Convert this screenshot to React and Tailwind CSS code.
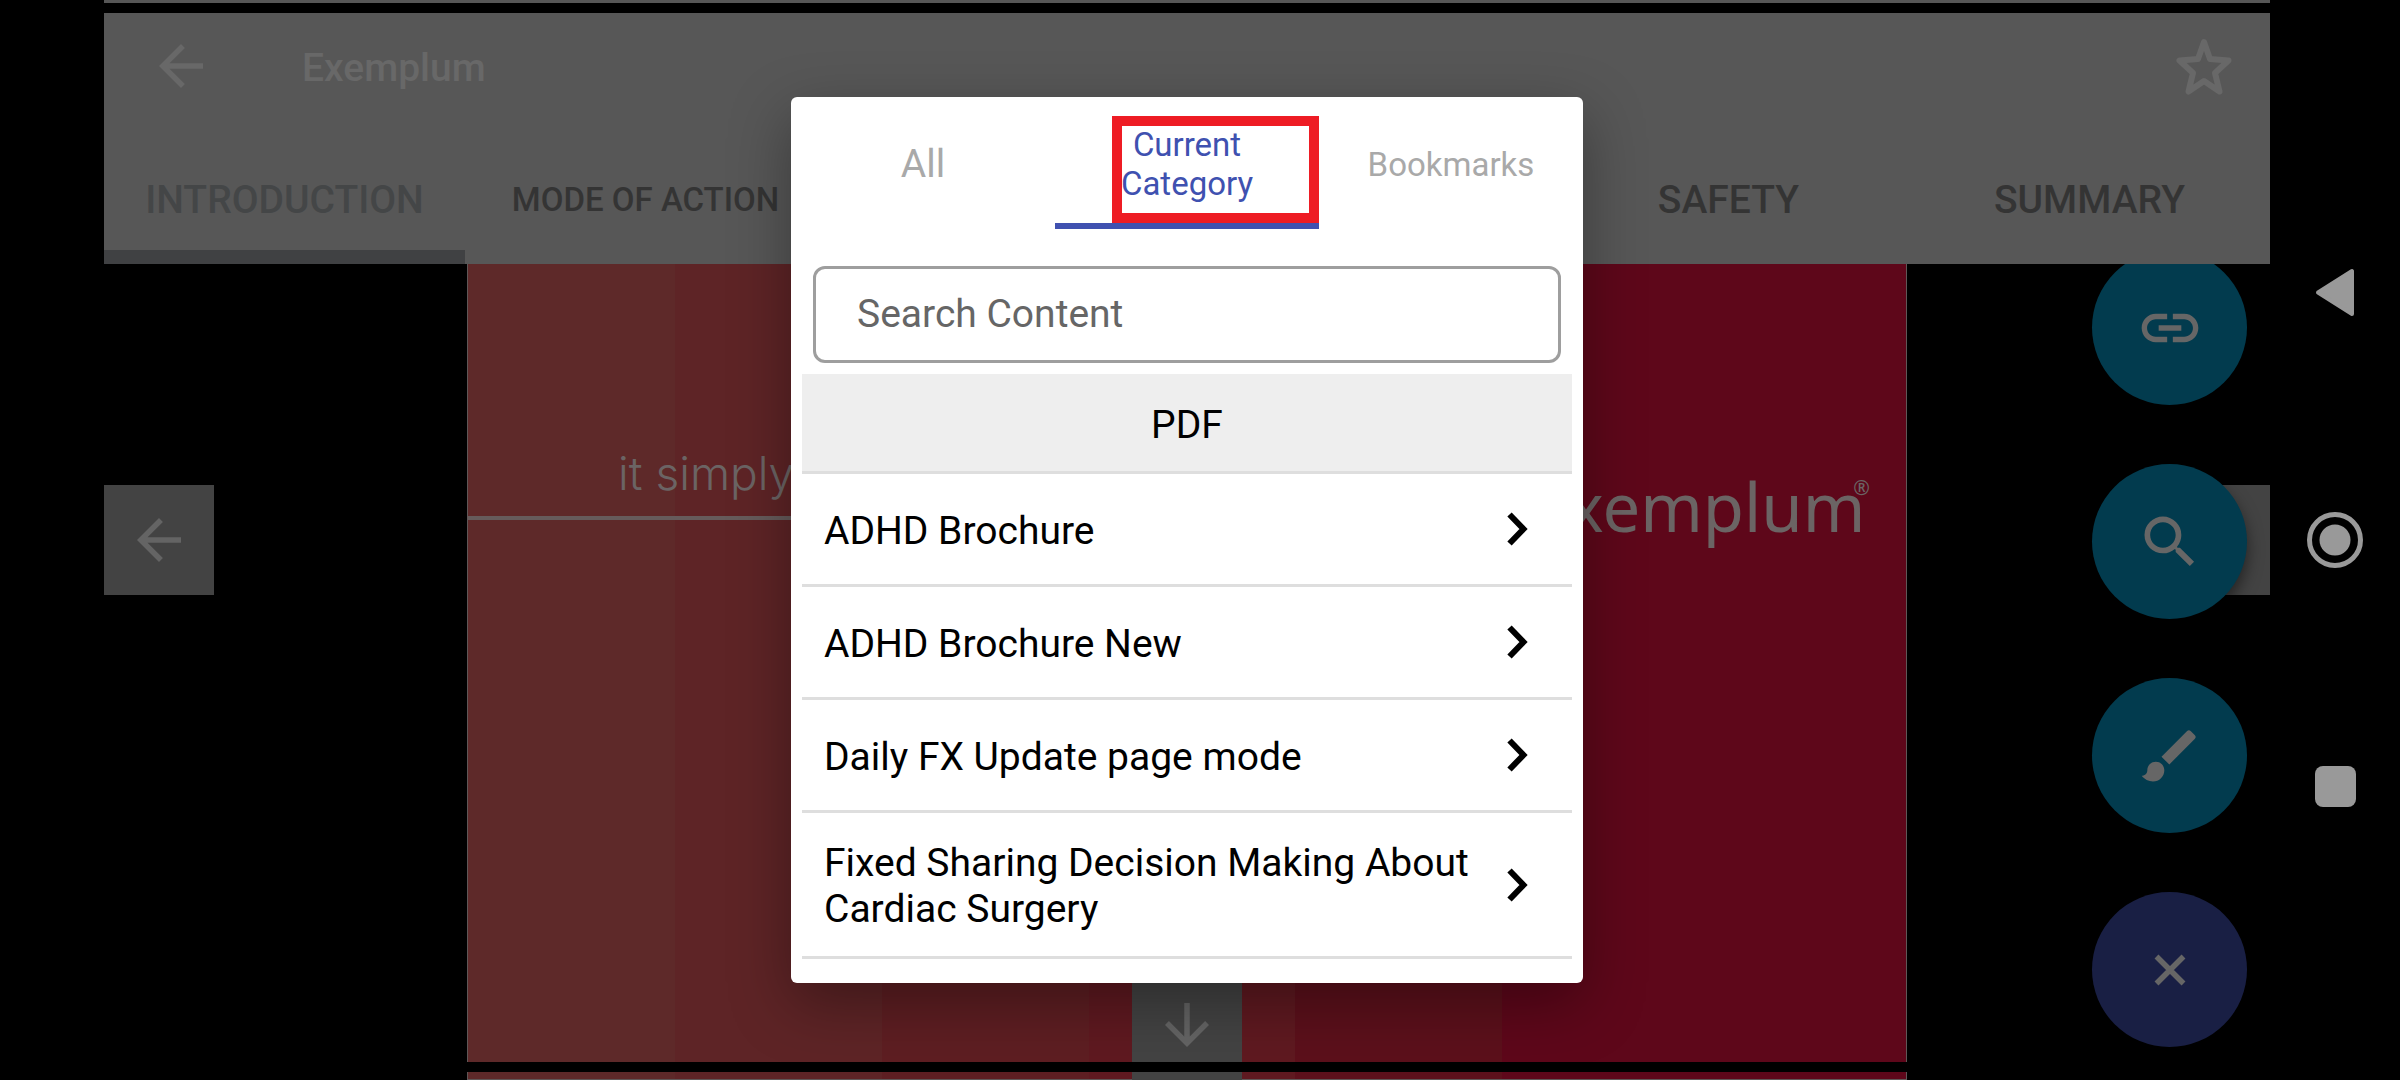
import { MdArrowBack, MdArrowDownward, MdArrowForward, MdBrush, MdLink, MdSearch } from "react-icons/md";
import clsx from "clsx";

const SECTIONS = [
  { label: "INTRODUCTION", active: true },
  { label: "MODE OF ACTION", small: true },
  { label: "" },
  { label: "" },
  { label: "SAFETY" },
  { label: "SUMMARY" },
];

const FILTERS = [
  { label: "All", className: "text-[39px] text-[#a9a9a9]" },
  { label: "Current Category", className: "text-[33px] text-[#3f51b0]", active: true },
  { label: "Bookmarks", className: "text-[33px] text-[#a9a9a9]" },
];

const DOCUMENTS = [
  "ADHD Brochure",
  "ADHD Brochure New",
  "Daily FX Update page mode",
  "Fixed Sharing Decision Making About Cardiac Surgery",
];

const ACTIONS = [
  { label: "Links", Icon: MdLink, className: "bg-[#023b4e]" },
  { label: "Search", Icon: MdSearch, className: "bg-[#023b4e]" },
  { label: "Draw", Icon: MdBrush, className: "bg-[#023b4e]" },
  { label: "Close menu", Icon: CloseIcon, className: "bg-[#191f44]" },
];

function StarIcon() {
  return (
    <svg width="66" height="66" viewBox="0 0 66 66" fill="none" stroke="currentColor" strokeWidth="6" strokeLinejoin="round">
      <path d="M33 9 L39 26 L57.5 27.5 L44 40 L48.5 58.5 L33 48 L17.5 58.5 L22 40 L8.5 27.5 L27 26 Z" />
    </svg>
  );
}

function CloseIcon({ size }) {
  return (
    <svg width={size} height={size} viewBox="0 0 68 68" fill="none" stroke="currentColor" strokeWidth="5.5">
      <path d="M20.5 20.5 L47.5 47.5 M47.5 20.5 L20.5 47.5" />
    </svg>
  );
}

function ChevronIcon() {
  return (
    <svg width="66" height="66" viewBox="0 0 66 66" fill="none" stroke="currentColor" strokeWidth="6" className="-my-4 shrink-0">
      <path d="M25.5 18.5 L39.5 33 L25.5 47.5" />
    </svg>
  );
}

function Header() {
  return (
    <header className="bg-[#575757]">
      <div className="flex h-[132px] items-center pr-[33px] pl-11 text-[#686868]">
        <button type="button" aria-label="Back">
          <MdArrowBack size={66} />
        </button>
        <h1 className="ml-[88px] flex-1 pt-1 text-[39px] font-medium">Exemplum</h1>
        <button type="button" aria-label="Add bookmark">
          <StarIcon />
        </button>
      </div>
      <nav className="grid h-[132px] grid-cols-6">
        {SECTIONS.map((section, i) =>
          section.label ? (
            <button
              key={i}
              type="button"
              className={clsx(
                "border-y-[14px] border-t-transparent pt-1 font-medium whitespace-nowrap",
                section.small ? "text-[33px]" : "text-[39px]",
                section.active ? "border-b-[#404143] text-[#444647]" : "border-b-transparent text-[#343434]"
              )}
            >
              {section.label}
            </button>
          ) : (
            <span key={i} />
          )
        )}
      </nav>
    </header>
  );
}

function Slide() {
  return (
    <div className="mx-auto flex w-2/3 max-w-[1440px] border-x border-b border-[#5f5757] bg-[linear-gradient(90deg,#5e2929_0_14.4%,#5e2426_14.4%_28.8%,#5e1e22_28.8%_43.2%,#5f1920_43.2%_57.5%,#5c101b_57.5%_71.9%,#5e071a_71.9%)] text-[#6b6464]">
      <div className="flex-1 pt-[177px]">
        <p className="border-b-4 border-[#665b5b] pb-[11px] pl-[150px] font-[Inter,sans-serif] text-[46px] leading-[64px] font-light">it simply</p>
      </div>
      <div className="flex-1 pt-[196px] pr-9 text-right">
        <p className="font-['Noto_Sans',sans-serif] text-[67px] leading-[90px]">
          exemplum<sup className="top-0 -ml-3 align-text-top text-[20px] leading-[56px]">®</sup>
        </p>
      </div>
    </div>
  );
}

function PageButton({ label, Icon, className }) {
  return (
    <button
      type="button"
      aria-label={label}
      className={clsx("absolute flex size-[110px] items-center justify-center bg-[#434343] text-[#646464]", className)}
    >
      <Icon size={66} />
    </button>
  );
}

function ActionMenu() {
  return (
    <div className="absolute right-[23px] bottom-[33px] flex flex-col gap-[59px]">
      {ACTIONS.map(({ label, Icon, className }) => (
        <button
          key={label}
          type="button"
          aria-label={label}
          className={clsx("flex size-[155px] items-center justify-center rounded-full text-[#666] shadow-[0_8px_16px_rgba(0,0,0,0.5)]", className)}
        >
          <Icon size={68} />
        </button>
      ))}
    </div>
  );
}

function ContentDialog() {
  return (
    <div role="dialog" aria-label="Content" className="w-[792px] rounded-md bg-white pb-6 shadow-[0_20px_60px_rgba(0,0,0,0.35)]">
      <div role="tablist" className="grid h-[132px] grid-cols-3">
        {FILTERS.map((filter) => (
          <button
            key={filter.label}
            type="button"
            role="tab"
            aria-selected={Boolean(filter.active)}
            className={clsx(
              "relative border-y-[6px] border-t-transparent pt-[2px] leading-[39px]",
              filter.active ? "border-b-[#4051b0] px-12" : "border-b-transparent",
              filter.className
            )}
          >
            {filter.label}
            {filter.active && <span className="absolute right-0 bottom-0 h-[107px] w-[207px] border-[10px] border-[#ee1c24]" />}
          </button>
        ))}
      </div>
      <div className="px-[22px] pt-[37px] pb-[11px]">
        <input
          type="text"
          aria-label="Search Content"
          placeholder="Search Content"
          className="h-[97px] w-full rounded-xl border-[3px] border-[#9e9e9e] px-[41px] pb-[2px] text-[39px] placeholder:text-[#666] placeholder:opacity-100"
        />
      </div>
      <section className="mx-[11px] text-[39px] leading-[46px] text-black">
        <h2 className="flex h-[100px] items-center justify-center border-b-[3px] border-[#dedede] bg-[#eee]">
          <span className="pt-1">PDF</span>
        </h2>
        <ul>
          {DOCUMENTS.map((name) => (
            <li key={name} className="border-b-[3px] border-[#dedede]">
              <button type="button" className="flex min-h-[110px] w-full items-center px-[22px] py-6 text-left">
                <span className="flex-1 pt-[3px]">{name}</span>
                <ChevronIcon />
              </button>
            </li>
          ))}
        </ul>
      </section>
    </div>
  );
}

function SystemBar() {
  return (
    <nav className="flex w-[130px] flex-col items-center justify-center gap-[186px] text-[#999]">
      <button type="button" aria-label="System back">
        <svg width="60" height="60" viewBox="0 0 60 60" fill="currentColor" stroke="currentColor" strokeWidth="4" strokeLinejoin="round">
          <path d="M13 28.5 L47 7 V50 Z" />
        </svg>
      </button>
      <button type="button" aria-label="Home">
        <svg width="60" height="60" viewBox="0 0 60 60">
          <circle cx="30" cy="30" r="25.5" fill="none" stroke="currentColor" strokeWidth="5" />
          <circle cx="30" cy="30" r="15.5" fill="currentColor" />
        </svg>
      </button>
      <button type="button" aria-label="Recent apps" className="flex size-[60px] items-center justify-center">
        <span className="size-[41px] rounded-lg bg-[#999]" />
      </button>
    </nav>
  );
}

export default function App() {
  return (
    <div className="flex min-h-screen bg-black pl-[104px] font-[Roboto,sans-serif]">
      <main className="relative flex flex-1 flex-col">
        <Header />
        <div className="relative flex flex-1 overflow-hidden">
          <Slide />
          <PageButton label="Next page down" Icon={MdArrowDownward} className="bottom-0 left-1/2 -translate-x-1/2" />
        </div>
        <div className="absolute inset-0 flex items-center justify-between">
          <PageButton label="Previous slide" Icon={MdArrowBack} className="left-0" />
          <PageButton label="Next slide" Icon={MdArrowForward} className="right-0" />
        </div>
        <div className="absolute inset-x-0 top-[264px] bottom-0 overflow-hidden">
          <ActionMenu />
        </div>
        <div className="absolute inset-x-0 top-[3px] h-[10px] bg-black" />
        <div className="absolute inset-x-0 bottom-2 h-[10px] bg-black" />
        <div className="absolute inset-0 flex items-center justify-center">
          <ContentDialog />
        </div>
      </main>
      <SystemBar />
    </div>
  );
}
